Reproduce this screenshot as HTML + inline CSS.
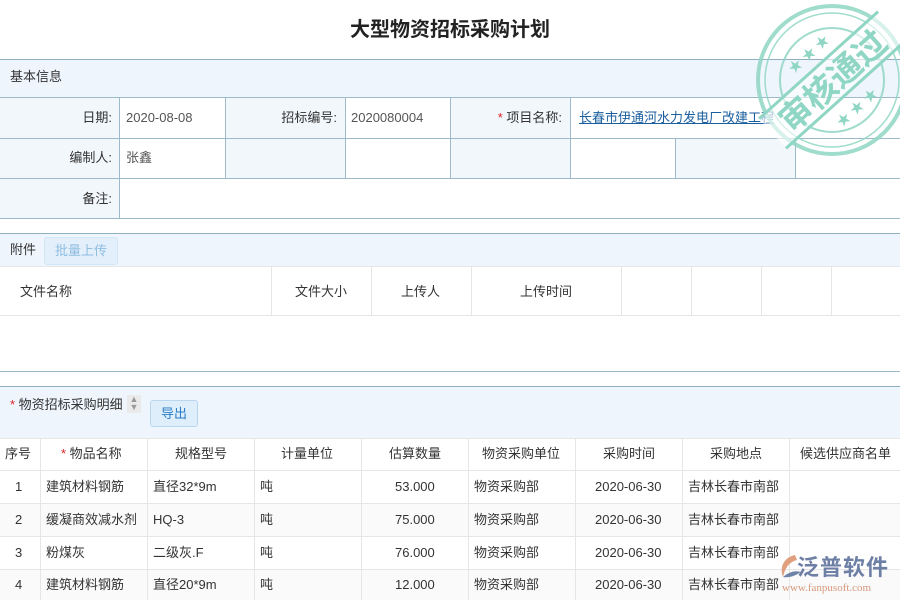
<!DOCTYPE html>
<html><head><meta charset="utf-8"><style>
*{box-sizing:border-box;margin:0;padding:0}
body{width:900px;height:600px;overflow:hidden;background:#fff;font-family:"Liberation Sans","Noto Sans CJK SC",sans-serif;font-size:13px;color:#333;position:relative}
.a{position:absolute}
.hdr{background:#eef5fd;border-top:1px solid #8fb0c4}
.ln{position:absolute;background:#9dbacb}
.gl{position:absolute;background:#e6e6e6}
.t{position:absolute;white-space:nowrap;line-height:16px;height:16px}
</style></head><body>
<div class="t" style="left:0;width:900px;top:18px;height:24px;line-height:24px;text-align:center;font-size:20px;font-weight:bold;color:#222">大型物资招标采购计划</div>

<div class="a hdr" style="left:0;top:59px;width:900px;height:38px"></div>
<div class="t" style="left:10px;top:69px">基本信息</div>
<div class="a" style="left:0;top:97px;width:119px;height:121px;background:#f2f7fc"></div>
<div class="a" style="left:225px;top:97px;width:120px;height:81px;background:#f2f7fc"></div>
<div class="a" style="left:450px;top:97px;width:120px;height:81px;background:#f2f7fc"></div>
<div class="a" style="left:675px;top:138px;width:120px;height:40px;background:#f2f7fc"></div>
<div class="ln" style="left:0;top:97px;width:900px;height:1px"></div>
<div class="ln" style="left:0;top:138px;width:900px;height:1px"></div>
<div class="ln" style="left:0;top:178px;width:900px;height:1px"></div>
<div class="ln" style="left:0;top:218px;width:900px;height:1px"></div>
<div class="ln" style="left:119px;top:97px;width:1px;height:121px"></div>
<div class="ln" style="left:225px;top:97px;width:1px;height:81px"></div>
<div class="ln" style="left:345px;top:97px;width:1px;height:81px"></div>
<div class="ln" style="left:450px;top:97px;width:1px;height:81px"></div>
<div class="ln" style="left:570px;top:97px;width:1px;height:81px"></div>
<div class="ln" style="left:675px;top:138px;width:1px;height:40px"></div>
<div class="ln" style="left:795px;top:138px;width:1px;height:40px"></div>
<div class="t" style="right:788px;top:110px">日期:</div>
<div class="t" style="left:126px;top:110px;color:#555">2020-08-08</div>
<div class="t" style="right:563px;top:110px">招标编号:</div>
<div class="t" style="left:351px;top:110px;color:#555">2020080004</div>
<div class="t" style="right:338px;top:110px"><span style="color:#d22">*</span> 项目名称:</div>
<div class="t" style="left:579px;top:110px;color:#1a5e9e;text-decoration:underline">长春市伊通河水力发电厂改建工程</div>
<div class="t" style="right:788px;top:150px">编制人:</div>
<div class="t" style="left:126px;top:150px;color:#555">张鑫</div>
<div class="t" style="right:788px;top:191px">备注:</div>

<div class="a hdr" style="left:0;top:233px;width:900px;height:33px"></div>
<div class="t" style="left:10px;top:242px">附件</div>
<div class="a" style="left:44px;top:237px;width:74px;height:28px;background:#e3f0fb;border:1px solid #d3e6f5;border-radius:3px;color:#8fbde0;text-align:center;line-height:26px">批量上传</div>
<div class="gl" style="left:0;top:266px;width:900px;height:1px"></div>
<div class="gl" style="left:0;top:315px;width:900px;height:1px"></div>
<div class="gl" style="left:271px;top:266px;width:1px;height:49px"></div>
<div class="gl" style="left:371px;top:266px;width:1px;height:49px"></div>
<div class="gl" style="left:471px;top:266px;width:1px;height:49px"></div>
<div class="gl" style="left:621px;top:266px;width:1px;height:49px"></div>
<div class="gl" style="left:691px;top:266px;width:1px;height:49px"></div>
<div class="gl" style="left:761px;top:266px;width:1px;height:49px"></div>
<div class="gl" style="left:831px;top:266px;width:1px;height:49px"></div>
<div class="t" style="left:20px;top:284px">文件名称</div>
<div class="t" style="left:295px;top:284px">文件大小</div>
<div class="t" style="left:401px;top:284px">上传人</div>
<div class="t" style="left:520px;top:284px">上传时间</div>
<div class="ln" style="left:0;top:371px;width:900px;height:1px"></div>

<div class="a hdr" style="left:0;top:386px;width:900px;height:52px"></div>
<div class="t" style="left:10px;top:397px"><span style="color:#d22">*</span> 物资招标采购明细</div>
<div class="a" style="left:127px;top:395px;width:14px;height:18px;font-size:9px;color:#999;line-height:8px;background:#eaeaea;text-align:center">▲<br>▼</div>
<div class="a" style="left:150px;top:400px;width:48px;height:27px;background:#dfeefb;border:1px solid #b9d6ee;border-radius:3px;color:#2a7cc7;text-align:center;line-height:25px">导出</div>

<div class="a" style="left:0;top:503px;width:900px;height:33px;background:#fafafa"></div>
<div class="a" style="left:0;top:569px;width:900px;height:31px;background:#fafafa"></div>
<div class="gl" style="left:0;top:438px;width:900px;height:1px"></div>
<div class="gl" style="left:0;top:470px;width:900px;height:1px"></div>
<div class="gl" style="left:0;top:503px;width:900px;height:1px"></div>
<div class="gl" style="left:0;top:536px;width:900px;height:1px"></div>
<div class="gl" style="left:0;top:569px;width:900px;height:1px"></div>
<div class="gl" style="left:40px;top:438px;width:1px;height:162px"></div>
<div class="gl" style="left:147px;top:438px;width:1px;height:162px"></div>
<div class="gl" style="left:254px;top:438px;width:1px;height:162px"></div>
<div class="gl" style="left:361px;top:438px;width:1px;height:162px"></div>
<div class="gl" style="left:468px;top:438px;width:1px;height:162px"></div>
<div class="gl" style="left:575px;top:438px;width:1px;height:162px"></div>
<div class="gl" style="left:682px;top:438px;width:1px;height:162px"></div>
<div class="gl" style="left:789px;top:438px;width:1px;height:162px"></div>
<div class="t" style="left:5px;top:446px">序号</div>
<div class="t" style="left:61px;top:446px"><span style="color:#d22">*</span> 物品名称</div>
<div class="t" style="left:175px;top:446px">规格型号</div>
<div class="t" style="left:281px;top:446px">计量单位</div>
<div class="t" style="left:389px;top:446px">估算数量</div>
<div class="t" style="left:482px;top:446px">物资采购单位</div>
<div class="t" style="left:603px;top:446px">采购时间</div>
<div class="t" style="left:710px;top:446px">采购地点</div>
<div class="t" style="left:800px;top:446px">候选供应商名单</div>

<div class="t" style="left:15px;top:479px">1</div><div class="t" style="left:46px;top:479px">建筑材料钢筋</div><div class="t" style="left:153px;top:479px">直径32*9m</div><div class="t" style="left:260px;top:479px">吨</div><div class="t" style="left:395px;top:479px">53.000</div><div class="t" style="left:474px;top:479px">物资采购部</div><div class="t" style="left:595px;top:479px">2020-06-30</div><div class="t" style="left:688px;top:479px">吉林长春市南部</div>
<div class="t" style="left:15px;top:512px">2</div><div class="t" style="left:46px;top:512px">缓凝商效减水剂</div><div class="t" style="left:153px;top:512px">HQ-3</div><div class="t" style="left:260px;top:512px">吨</div><div class="t" style="left:395px;top:512px">75.000</div><div class="t" style="left:474px;top:512px">物资采购部</div><div class="t" style="left:595px;top:512px">2020-06-30</div><div class="t" style="left:688px;top:512px">吉林长春市南部</div>
<div class="t" style="left:15px;top:545px">3</div><div class="t" style="left:46px;top:545px">粉煤灰</div><div class="t" style="left:153px;top:545px">二级灰.F</div><div class="t" style="left:260px;top:545px">吨</div><div class="t" style="left:395px;top:545px">76.000</div><div class="t" style="left:474px;top:545px">物资采购部</div><div class="t" style="left:595px;top:545px">2020-06-30</div><div class="t" style="left:688px;top:545px">吉林长春市南部</div>
<div class="t" style="left:15px;top:577px">4</div><div class="t" style="left:46px;top:577px">建筑材料钢筋</div><div class="t" style="left:153px;top:577px">直径20*9m</div><div class="t" style="left:260px;top:577px">吨</div><div class="t" style="left:395px;top:577px">12.000</div><div class="t" style="left:474px;top:577px">物资采购部</div><div class="t" style="left:595px;top:577px">2020-06-30</div><div class="t" style="left:688px;top:577px">吉林长春市南部</div>

<svg class="a" style="left:750px;top:0" width="150" height="160" viewBox="750 0 150 160">
<g fill="none" stroke="#8fd6c4" opacity="0.85">
<circle cx="832" cy="80" r="74" stroke-width="4"/>
<circle cx="832" cy="80" r="67" stroke-width="1.5"/>
<circle cx="832" cy="80" r="52" stroke-width="2"/>
</g>
<g transform="rotate(-42 832 80)">
<rect x="752" y="60" width="160" height="40" fill="#fff" opacity="0.6"/>
<line x1="752" y1="60" x2="912" y2="60" stroke="#8fd6c4" stroke-width="3"/>
<line x1="752" y1="100" x2="912" y2="100" stroke="#8fd6c4" stroke-width="3"/>
<text x="832" y="93" text-anchor="middle" font-family="Noto Sans CJK SC,sans-serif" font-weight="bold" font-size="33" fill="#8fd6c4">审核通过</text>
<text x="832" y="50" text-anchor="middle" font-size="14" fill="#8fd6c4">★ ★ ★</text>
<text x="832" y="122" text-anchor="middle" font-size="14" fill="#8fd6c4">★ ★ ★</text>
</g>
</svg>

<svg class="a" style="left:775px;top:552px" width="30" height="30" viewBox="0 0 30 30">
<path d="M20 3 C10 5 4 14 8 25 C10 16 14 10 22 8 Z" fill="#e0a080"/>
<path d="M8 25 C14 20 20 18 26 20 C20 24 14 26 8 25 Z" fill="#6d83a8"/>
</svg>
<div class="t" style="left:797px;top:555px;height:26px;line-height:26px;font-size:22px;font-weight:bold;color:#6d7fa5;letter-spacing:1px">泛普软件</div>
<div class="t" style="left:782px;top:580px;font-size:11px;font-family:'Liberation Serif',serif;color:#d7987a">www.fanpusoft.com</div>
</body></html>
